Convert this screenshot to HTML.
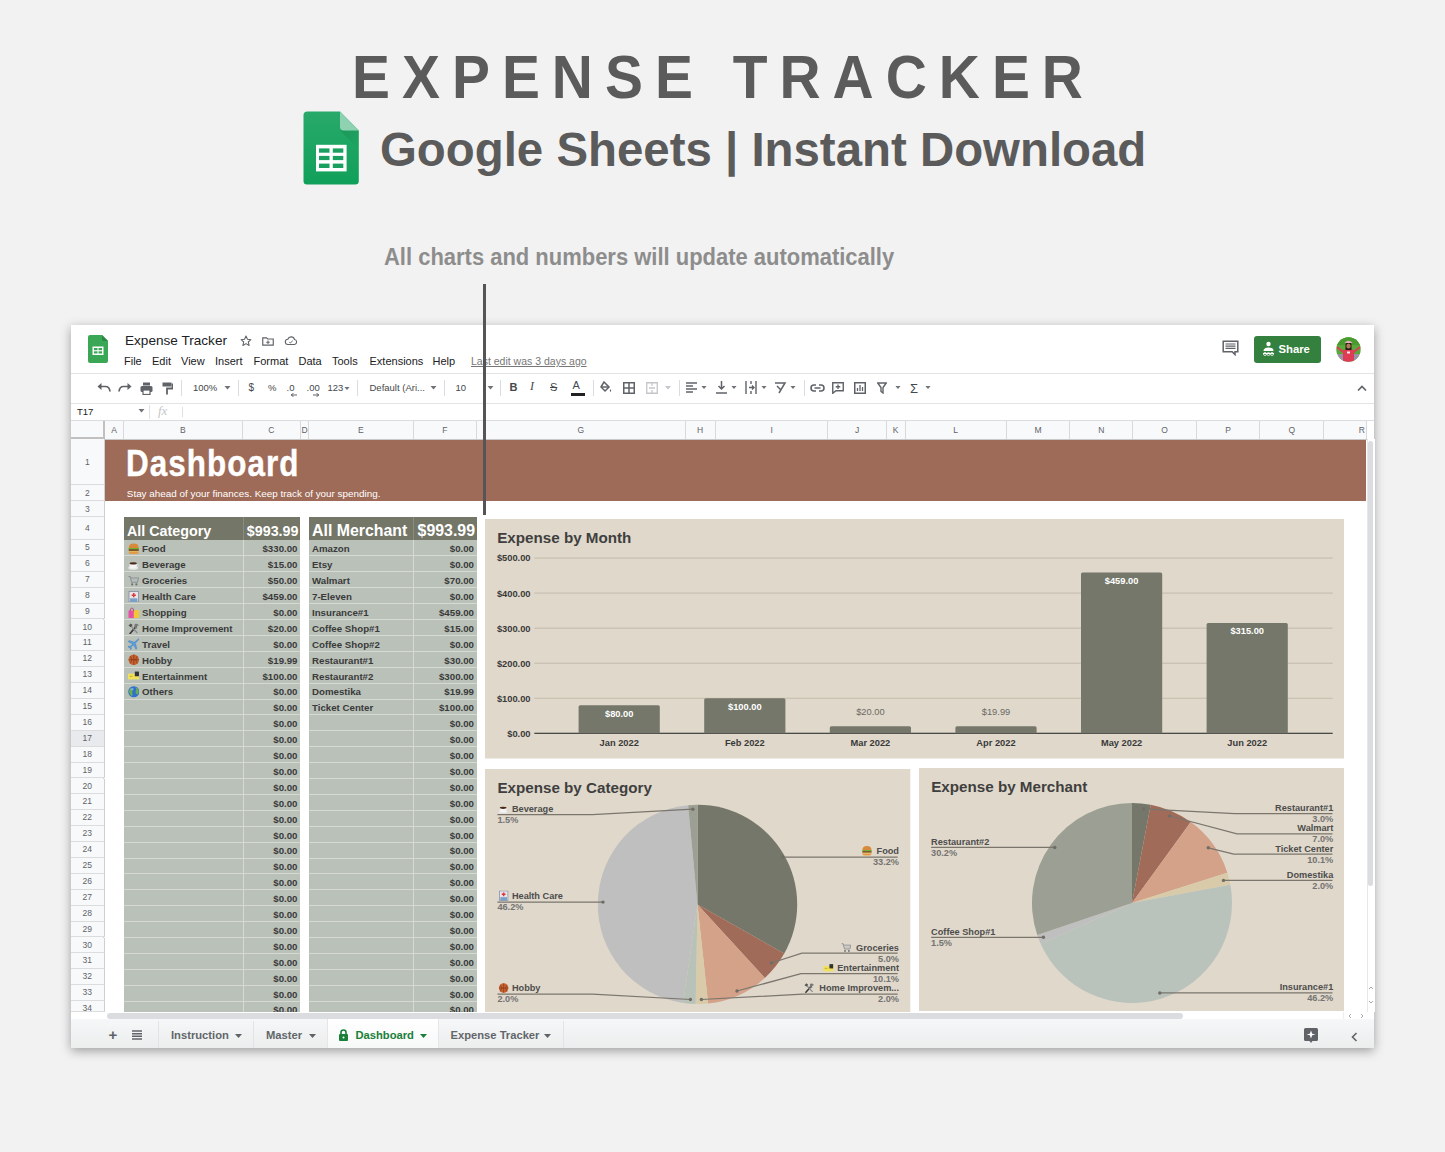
<!DOCTYPE html>
<html><head><meta charset="utf-8">
<style>
*{box-sizing:border-box;margin:0;padding:0}
html,body{width:1445px;height:1152px;overflow:hidden;background:#f2f2f2;font-family:"Liberation Sans",sans-serif}
.a{position:absolute;white-space:nowrap}
#title{left:351.5px;top:47px;font-size:60.5px;font-weight:bold;color:#5b5b5b;letter-spacing:12.8px;line-height:60px;transform:scaleX(.94);transform-origin:0 0}
#sub{left:380px;top:122px;font-size:47.4px;font-weight:bold;color:#5b5b5b;line-height:56px}
#note{left:384px;top:244px;font-size:23px;font-weight:bold;color:#8d8d8d;line-height:26px;transform:scaleX(.955);transform-origin:0 0}
#vline{left:483px;top:284px;width:3px;height:231px;background:#555;z-index:50}
#win{left:71px;top:325px;width:1303px;height:723px;background:#fff;box-shadow:0 3px 10px rgba(0,0,0,.35)}
.menu{font-size:11px;color:#202124;top:354px;line-height:14px}
.tb{color:#45484c;font-size:9.5px;top:382px;line-height:12px}
.tab{top:1027.5px;font-size:11.2px;font-weight:bold;color:#62666a;line-height:14px}
.ch{top:421px;height:18px;background:#f8f9fa;border-right:1px solid #d9d9d9;font-size:8.5px;color:#5f6368;text-align:center;line-height:18px}
.rh{left:71px;width:33.5px;background:#f8f9fa;border-bottom:1px solid #dcdcdc;border-right:1px solid #cfcfcf;font-size:8.5px;color:#5f6368;text-align:center}
.cell{height:15.9px;font-size:9.7px;font-weight:bold;color:#3a3a3a;line-height:16px}
.hd{font-size:14.5px;font-weight:bold;color:#fff;line-height:18px}
</style></head><body>
<div id="title" class="a">EXPENSE TRACKER</div>
<svg class="a" style="left:303px;top:111px" width="56" height="74" viewBox="0 0 56 74">
 <defs><linearGradient id="bg1" x1="0" y1="0" x2="0" y2="1"><stop offset="0" stop-color="#28a96a"/><stop offset="1" stop-color="#10a05a"/></linearGradient><linearGradient id="fs" x1="0" y1="0" x2="1" y2="1"><stop offset="0" stop-color="#0f7a40" stop-opacity=".35"/><stop offset="1" stop-color="#0f7a40" stop-opacity="0"/></linearGradient></defs>
 <path d="M4.5 .6 H37 L55.8 19.4 V70 Q55.8 73.6 52.2 73.6 H4.1 Q.5 73.6 .5 70 V4.2 Q.5 .6 4.5 .6Z" fill="url(#bg1)"/>
 <path d="M37 19.4 L55.8 38 V19.4Z" fill="url(#fs)"/>
 <path d="M37 .6 L55.8 19.4 H40.5 Q37 19.4 37 16Z" fill="#8ed2b2"/>
 <rect x="13" y="33.8" width="30.6" height="26.6" fill="#fff"/>
 <rect x="16" y="37.4" width="10.5" height="4.3" fill="#19a05e"/><rect x="29.8" y="37.4" width="10.5" height="4.3" fill="#19a05e"/>
 <rect x="16" y="44.9" width="10.5" height="4.2" fill="#19a05e"/><rect x="29.8" y="44.9" width="10.5" height="4.2" fill="#19a05e"/>
 <rect x="16" y="52.6" width="10.5" height="4.4" fill="#19a05e"/><rect x="29.8" y="52.6" width="10.5" height="4.4" fill="#19a05e"/>
</svg>
<div id="sub" class="a">Google Sheets | Instant Download</div>
<div id="note" class="a">All charts and numbers will update automatically</div>
<div id="win" class="a"></div>
<!-- title bar -->
<svg class="a" style="left:88px;top:335px" width="20" height="28" viewBox="0 0 20 28">
 <path d="M2 0 H14 L20 6 V26 Q20 28 18 28 H2 Q0 28 0 26 V2 Q0 0 2 0Z" fill="#3aa757"/>
 <path d="M14 0 L20 6 H15.5 Q14 6 14 4.5Z" fill="#2a8a44"/>
 <rect x="4.5" y="11.5" width="11" height="8.5" fill="#fff"/>
 <rect x="6" y="13" width="3.5" height="2.2" fill="#3aa757"/><rect x="10.5" y="13" width="3.5" height="2.2" fill="#3aa757"/>
 <rect x="6" y="16.3" width="3.5" height="2.2" fill="#3aa757"/><rect x="10.5" y="16.3" width="3.5" height="2.2" fill="#3aa757"/>
</svg>
<div class="a" style="left:125px;top:333px;font-size:13.6px;color:#202124;line-height:16px">Expense Tracker</div>
<svg class="a" style="left:239px;top:334px" width="14" height="14" viewBox="0 0 24 24"><path d="M12 3.5l2.5 5.6 6 .6-4.6 4 1.4 6-5.3-3.2-5.3 3.2 1.4-6-4.6-4 6-.6z" fill="none" stroke="#5f6368" stroke-width="1.8" stroke-linejoin="round"/></svg>
<svg class="a" style="left:261px;top:334px" width="14" height="14" viewBox="0 0 24 24"><path d="M3 6.5h6.5l2 2H21V19H3z" fill="none" stroke="#5f6368" stroke-width="2"/><path d="M12 11v6M9 14h6" stroke="#5f6368" stroke-width="1.8"/></svg>
<svg class="a" style="left:284px;top:334px" width="14" height="14" viewBox="0 0 24 24"><path d="M7 18a4.5 4.5 0 0 1-.5-9A6 6 0 0 1 18 9.5 4.3 4.3 0 0 1 18 18z" fill="none" stroke="#5f6368" stroke-width="1.9"/><path d="M9 13.5l2 2 4-4" fill="none" stroke="#5f6368" stroke-width="1.7"/></svg>
<div class="a menu" style="left:124px">File</div>
<div class="a menu" style="left:152px">Edit</div>
<div class="a menu" style="left:181px">View</div>
<div class="a menu" style="left:215px">Insert</div>
<div class="a menu" style="left:253.5px">Format</div>
<div class="a menu" style="left:298.5px">Data</div>
<div class="a menu" style="left:332px">Tools</div>
<div class="a menu" style="left:369.5px">Extensions</div>
<div class="a menu" style="left:432.5px">Help</div>
<div class="a menu" style="left:471px;color:#777;text-decoration:underline;font-size:10.5px">Last edit was 3 days ago</div>
<svg class="a" style="left:1222px;top:340px" width="17" height="16" viewBox="0 0 17 16"><path d="M1.2 1.2h14.6v10.6h-2.8v2.8l-2.8-2.8H1.2z" fill="none" stroke="#5f6368" stroke-width="1.5"/><path d="M3.5 4h10M3.5 6.2h10M3.5 8.4h10" stroke="#5f6368" stroke-width="1.2"/></svg>
<div class="a" style="left:1254px;top:335.5px;width:67px;height:27px;background:#34803e;border-radius:3px"></div>
<svg class="a" style="left:1262px;top:341px" width="13" height="16" viewBox="0 0 13 16"><circle cx="6.5" cy="3" r="2.2" fill="#fff"/><path d="M1.5 10 Q1.5 6.5 6.5 6.5 Q11.5 6.5 11.5 10z" fill="#fff"/><path d="M1 12.5h11" stroke="#fff" stroke-width="1"/><circle cx="3" cy="13" r="1.5" fill="none" stroke="#fff" stroke-width=".8"/><circle cx="6.5" cy="13" r="1.5" fill="none" stroke="#fff" stroke-width=".8"/><circle cx="10" cy="13" r="1.5" fill="none" stroke="#fff" stroke-width=".8"/></svg>
<div class="a" style="left:1278.5px;top:342px;font-size:11.3px;font-weight:bold;color:#fff;line-height:14px">Share</div>
<svg class="a" style="left:1336px;top:337px" width="25" height="25" viewBox="0 0 25 25">
 <defs><clipPath id="av"><circle cx="12.5" cy="12.5" r="12.2"/></clipPath></defs>
 <g clip-path="url(#av)"><rect width="25" height="25" fill="#58a83a"/><rect x="0" y="0" width="25" height="8" fill="#4b9a30"/>
 <path d="M1 9 L7 13.5 L9 12.5 L16 12.5 L18 13.5 L24 9 L24.5 11 L18 16 L18 25 L7 25 L7 16 L.5 11z" fill="#e03a55"/>
 <path d="M9.5 8 Q9.5 5 12.5 5 Q15.5 5 15.5 8 L15.5 13 L9.5 13z" fill="#2a1a14"/>
 <ellipse cx="12.5" cy="9" rx="2.2" ry="2.6" fill="#b07a5a"/>
 <path d="M8.5 6 Q12.5 1.5 16.5 6z" fill="#e0b0bc"/>
 <rect x="11" y="14.5" width="3" height="2" fill="#f0f0f0"/>
 <rect x="2" y="17" width="5" height="8" fill="#9a90a8"/><rect x="18" y="17" width="5" height="8" fill="#9a90a8"/></g>
</svg>
<div class="a" style="left:71px;top:373px;width:1303px;height:1px;background:#e3e3e3"></div>
<!-- toolbar -->
<svg class="a" style="left:97px;top:382px" width="14" height="12" viewBox="0 0 14 12"><path d="M3 4.5 H8.5 Q12.5 4.5 13 9.5" fill="none" stroke="#5f6368" stroke-width="1.7"/><path d="M0.5 4.5 L4.5 1 V8z" fill="#5f6368"/></svg>
<svg class="a" style="left:118px;top:382px" width="14" height="12" viewBox="0 0 14 12"><path d="M11 4.5 H5.5 Q1.5 4.5 1 9.5" fill="none" stroke="#5f6368" stroke-width="1.7"/><path d="M13.5 4.5 L9.5 1 V8z" fill="#5f6368"/></svg>
<svg class="a" style="left:140px;top:382px" width="13" height="13" viewBox="0 0 13 13"><rect x="3" y="0.5" width="7" height="3" fill="#5f6368"/><rect x="0.5" y="4" width="12" height="6" rx="1.5" fill="#5f6368"/><rect x="3" y="8" width="7" height="4.5" fill="#fff" stroke="#5f6368" stroke-width="1.2"/></svg>
<svg class="a" style="left:162px;top:382px" width="11" height="13" viewBox="0 0 11 13"><rect x="0.5" y="0.5" width="9" height="4" fill="#5f6368"/><path d="M9.5 2.5 H10.5 V6.5 H5 V12.5" fill="none" stroke="#5f6368" stroke-width="1.8"/></svg>
<div class="a" style="left:181px;top:380px;width:1px;height:16px;background:#dadce0"></div>
<div class="a tb" style="left:193px">100%</div>
<svg class="a" style="left:224px;top:386px" width="7" height="4" viewBox="0 0 7 4"><path d="M.5 0h6L3.5 3.5z" fill="#6f7378"/></svg>
<div class="a" style="left:237.5px;top:380px;width:1px;height:16px;background:#dadce0"></div>
<div class="a tb" style="left:248.5px;font-size:10px">$</div>
<div class="a tb" style="left:268px">%</div>
<div class="a tb" style="left:286.5px">.0</div>
<svg class="a" style="left:290px;top:393px" width="7" height="4" viewBox="0 0 7 4"><path d="M7 2H2M3.5 0.3 L1 2 L3.5 3.7" fill="none" stroke="#5f6368" stroke-width="1"/></svg>
<div class="a tb" style="left:306.5px">.00</div>
<svg class="a" style="left:313px;top:393px" width="7" height="4" viewBox="0 0 7 4"><path d="M0 2H5M3.5 0.3 L6 2 L3.5 3.7" fill="none" stroke="#5f6368" stroke-width="1"/></svg>
<div class="a tb" style="left:327.5px">123</div>
<svg class="a" style="left:344px;top:387px" width="6" height="3.5" viewBox="0 0 7 4"><path d="M.5 0h6L3.5 3.5z" fill="#6f7378"/></svg>
<div class="a" style="left:357px;top:380px;width:1px;height:16px;background:#dadce0"></div>
<div class="a tb" style="left:369.5px">Default (Ari...</div>
<svg class="a" style="left:430px;top:386px" width="7" height="4" viewBox="0 0 7 4"><path d="M.5 0h6L3.5 3.5z" fill="#6f7378"/></svg>
<div class="a" style="left:444px;top:380px;width:1px;height:16px;background:#dadce0"></div>
<div class="a tb" style="left:455.5px">10</div>
<svg class="a" style="left:487px;top:386px" width="7" height="4" viewBox="0 0 7 4"><path d="M.5 0h6L3.5 3.5z" fill="#6f7378"/></svg>
<div class="a" style="left:500px;top:380px;width:1px;height:16px;background:#dadce0"></div>
<div class="a tb" style="left:509.5px;font-weight:bold;font-size:11px;top:381px">B</div>
<div class="a tb" style="left:530px;font-style:italic;font-size:12px;top:380px;font-family:'Liberation Serif',serif">I</div>
<div class="a tb" style="left:550px;font-size:11px;top:381px;text-decoration:line-through">S</div>
<div class="a tb" style="left:572.5px;font-size:11px;top:379px">A</div>
<div class="a" style="left:571px;top:393px;width:14px;height:2.5px;background:#222"></div>
<div class="a" style="left:593px;top:380px;width:1px;height:16px;background:#dadce0"></div>
<svg class="a" style="left:600px;top:381px" width="12" height="13" viewBox="0 0 12 13"><path d="M4 1 L9 6 L5 10 L1 6z" fill="none" stroke="#5f6368" stroke-width="1.5"/><path d="M2 6h7" stroke="#5f6368" stroke-width="1.5"/><path d="M10.5 8 Q12 10 10.5 11 Q9 10 10.5 8z" fill="#5f6368"/></svg>
<svg class="a" style="left:623px;top:382px" width="12" height="12" viewBox="0 0 12 12"><path d="M.75 .75h10.5v10.5H.75zM6 .75v10.5M.75 6h10.5" fill="none" stroke="#5f6368" stroke-width="1.5"/></svg>
<svg class="a" style="left:646px;top:382px" width="12" height="12" viewBox="0 0 12 12"><path d="M.75 .75h10.5v10.5H.75zM6 .75v3M6 8v3M3 6h6" fill="none" stroke="#c4c6c9" stroke-width="1.3"/></svg>
<svg class="a" style="left:665px;top:386px" width="6" height="3.5" viewBox="0 0 7 4"><path d="M0 0h7L3.5 4z" fill="#c4c6c9"/></svg>
<div class="a" style="left:679px;top:380px;width:1px;height:16px;background:#dadce0"></div>
<svg class="a" style="left:686px;top:382px" width="11" height="11" viewBox="0 0 11 11"><path d="M0 1h11M0 4h7M0 7h11M0 10h7" stroke="#5f6368" stroke-width="1.4"/></svg>
<svg class="a" style="left:701px;top:386px" width="6" height="3.5" viewBox="0 0 7 4"><path d="M.5 0h6L3.5 3.5z" fill="#6f7378"/></svg>
<svg class="a" style="left:716px;top:381px" width="11" height="13" viewBox="0 0 11 13"><path d="M5.5 0v8M2.5 5l3 3 3-3M0 12h11" fill="none" stroke="#5f6368" stroke-width="1.5"/></svg>
<svg class="a" style="left:731px;top:386px" width="6" height="3.5" viewBox="0 0 7 4"><path d="M.5 0h6L3.5 3.5z" fill="#6f7378"/></svg>
<svg class="a" style="left:745px;top:381px" width="12" height="13" viewBox="0 0 12 13"><path d="M1 0v13M11 0v13M4 6.5h5M7 4.5l2 2-2 2M6 0v3M6 10v3" fill="none" stroke="#5f6368" stroke-width="1.4"/></svg>
<svg class="a" style="left:761px;top:386px" width="6" height="3.5" viewBox="0 0 7 4"><path d="M.5 0h6L3.5 3.5z" fill="#6f7378"/></svg>
<svg class="a" style="left:774px;top:382px" width="13" height="12" viewBox="0 0 13 12"><path d="M1 1h10l-6 10M3 4l4 4" fill="none" stroke="#5f6368" stroke-width="1.5"/></svg>
<svg class="a" style="left:790px;top:386px" width="6" height="3.5" viewBox="0 0 7 4"><path d="M.5 0h6L3.5 3.5z" fill="#6f7378"/></svg>
<div class="a" style="left:803.5px;top:380px;width:1px;height:16px;background:#dadce0"></div>
<svg class="a" style="left:810px;top:384px" width="15" height="8" viewBox="0 0 15 8"><path d="M6 1H4a3 3 0 0 0 0 6h2M9 1h2a3 3 0 0 1 0 6H9M4.5 4h6" fill="none" stroke="#5f6368" stroke-width="1.6"/></svg>
<svg class="a" style="left:832px;top:382px" width="12" height="12" viewBox="0 0 12 12"><path d="M.75 .75h10.5v8H4l-3.25 2.5z" fill="none" stroke="#5f6368" stroke-width="1.4"/><path d="M6 2.5v4.5M3.75 4.75h4.5" stroke="#5f6368" stroke-width="1.3"/></svg>
<svg class="a" style="left:854px;top:382px" width="12" height="12" viewBox="0 0 12 12"><path d="M.75 .75h10.5v10.5H.75z" fill="none" stroke="#5f6368" stroke-width="1.5"/><path d="M3.5 9V6M6 9V3M8.5 9V5" stroke="#5f6368" stroke-width="1.3"/></svg>
<svg class="a" style="left:877px;top:382px" width="10" height="12" viewBox="0 0 10 12"><path d="M.75 1h8.5L6 5.5V11L4 9.5V5.5z" fill="none" stroke="#5f6368" stroke-width="1.4"/></svg>
<svg class="a" style="left:895px;top:386px" width="6" height="3.5" viewBox="0 0 7 4"><path d="M.5 0h6L3.5 3.5z" fill="#6f7378"/></svg>
<div class="a tb" style="left:910px;font-size:13px;top:382px;line-height:13px">&Sigma;</div>
<svg class="a" style="left:925px;top:386px" width="6" height="3.5" viewBox="0 0 7 4"><path d="M.5 0h6L3.5 3.5z" fill="#6f7378"/></svg>
<svg class="a" style="left:1357px;top:385px" width="10" height="6" viewBox="0 0 10 6"><path d="M1 5.5 L5 1.5 L9 5.5" fill="none" stroke="#5f6368" stroke-width="1.6"/></svg>
<div class="a" style="left:71px;top:403px;width:1303px;height:1px;background:#e3e3e3"></div>
<!-- formula bar -->
<div class="a" style="left:77px;top:406px;font-size:9.5px;color:#202124;line-height:12px">T17</div>
<svg class="a" style="left:138px;top:409px" width="7" height="4" viewBox="0 0 7 4"><path d="M.5 0h6L3.5 3.5z" fill="#6f7378"/></svg>
<div class="a" style="left:148.5px;top:405px;width:1px;height:14px;background:#e0e0e0"></div>
<div class="a" style="left:158px;top:403px;font-size:13px;color:#c6c6c6;font-style:italic;font-family:'Liberation Serif',serif;line-height:16px">fx</div>
<div class="a" style="left:181.5px;top:407px;width:1px;height:10px;background:#e0e0e0"></div>
<div class="a" style="left:71px;top:420px;width:1303px;height:1px;background:#dadce0"></div>
<div class="a" style="left:71px;top:421px;width:1296px;height:18px;background:#f8f9fa"></div>
<div class="a ch" style="left:105px;width:19.0px">A</div>
<div class="a ch" style="left:124px;width:118.5px">B</div>
<div class="a ch" style="left:242.5px;width:58.5px">C</div>
<div class="a ch" style="left:301px;width:8.0px">D</div>
<div class="a ch" style="left:309px;width:104.5px">E</div>
<div class="a ch" style="left:413.5px;width:63.5px">F</div>
<div class="a ch" style="left:477px;width:208.5px">G</div>
<div class="a ch" style="left:685.5px;width:30.2px">H</div>
<div class="a ch" style="left:715.7px;width:112.8px">I</div>
<div class="a ch" style="left:828.5px;width:58.3px">J</div>
<div class="a ch" style="left:886.8px;width:18.8px">K</div>
<div class="a ch" style="left:905.6px;width:101.2px">L</div>
<div class="a ch" style="left:1006.8px;width:63.6px">M</div>
<div class="a ch" style="left:1070.4px;width:63.0px">N</div>
<div class="a ch" style="left:1133.4px;width:63.5px">O</div>
<div class="a ch" style="left:1196.9px;width:63.6px">P</div>
<div class="a ch" style="left:1260.5px;width:63.5px">Q</div>
<div class="a ch" style="left:1324px;width:43.0px;text-align:right;padding-right:1px">R</div>
<div class="a" style="left:71px;top:436.5px;width:34px;height:2.5px;background:#c0c0c0"></div>
<div class="a" style="left:102.5px;top:421px;width:2.5px;height:18px;background:#c0c0c0"></div>
<div class="a" style="left:71px;top:438.5px;width:1296px;height:1px;background:#c8c8c8"></div>
<div class="a" style="left:71px;top:439px;width:33px;height:573px;background:#f8f9fa;border-right:1px solid #d0d0d0"></div>
<div class="a rh" style="top:439.0px;height:46.0px;line-height:46.0px">1</div>
<div class="a rh" style="top:485.0px;height:16.0px;line-height:16.0px">2</div>
<div class="a rh" style="top:501.0px;height:16.0px;line-height:16.0px">3</div>
<div class="a rh" style="top:517.0px;height:23.0px;line-height:23.0px">4</div>
<div class="a rh" style="top:540.0px;height:15.9px;line-height:15.9px">5</div>
<div class="a rh" style="top:555.9px;height:15.9px;line-height:15.9px">6</div>
<div class="a rh" style="top:571.8px;height:15.9px;line-height:15.9px">7</div>
<div class="a rh" style="top:587.7px;height:15.9px;line-height:15.9px">8</div>
<div class="a rh" style="top:603.6px;height:15.9px;line-height:15.9px">9</div>
<div class="a rh" style="top:619.5px;height:15.9px;line-height:15.9px">10</div>
<div class="a rh" style="top:635.4px;height:15.9px;line-height:15.9px">11</div>
<div class="a rh" style="top:651.3px;height:15.9px;line-height:15.9px">12</div>
<div class="a rh" style="top:667.2px;height:15.9px;line-height:15.9px">13</div>
<div class="a rh" style="top:683.1px;height:15.9px;line-height:15.9px">14</div>
<div class="a rh" style="top:699.0px;height:15.9px;line-height:15.9px">15</div>
<div class="a rh" style="top:714.9px;height:15.9px;line-height:15.9px">16</div>
<div class="a rh" style="top:730.8px;height:15.9px;line-height:15.9px">17</div>
<div class="a rh" style="top:746.7px;height:15.9px;line-height:15.9px">18</div>
<div class="a rh" style="top:762.6px;height:15.9px;line-height:15.9px">19</div>
<div class="a rh" style="top:778.5px;height:15.9px;line-height:15.9px">20</div>
<div class="a rh" style="top:794.4px;height:15.9px;line-height:15.9px">21</div>
<div class="a rh" style="top:810.3px;height:15.9px;line-height:15.9px">22</div>
<div class="a rh" style="top:826.2px;height:15.9px;line-height:15.9px">23</div>
<div class="a rh" style="top:842.1px;height:15.9px;line-height:15.9px">24</div>
<div class="a rh" style="top:858.0px;height:15.9px;line-height:15.9px">25</div>
<div class="a rh" style="top:873.9px;height:15.9px;line-height:15.9px">26</div>
<div class="a rh" style="top:889.8px;height:15.9px;line-height:15.9px">27</div>
<div class="a rh" style="top:905.7px;height:15.9px;line-height:15.9px">28</div>
<div class="a rh" style="top:921.6px;height:15.9px;line-height:15.9px">29</div>
<div class="a rh" style="top:937.5px;height:15.9px;line-height:15.9px">30</div>
<div class="a rh" style="top:953.4px;height:15.9px;line-height:15.9px">31</div>
<div class="a rh" style="top:969.3px;height:15.9px;line-height:15.9px">32</div>
<div class="a rh" style="top:985.2px;height:15.9px;line-height:15.9px">33</div>
<div class="a rh" style="top:1001.1px;height:10.9px;line-height:15.9px">34</div>
<div class="a" style="left:71px;top:730.8px;width:33.5px;height:15.9px;background:#e8eaed;border-bottom:1px solid #dcdcdc;border-right:1px solid #cfcfcf;font-size:8.5px;color:#5f6368;text-align:center;line-height:15.9px">17</div>
<div class="a" style="left:105px;top:439.5px;width:1261px;height:61.5px;background:#9e6b58"></div>
<div class="a" style="left:126px;top:439px;font-size:37px;font-weight:bold;color:#fff;line-height:50px;-webkit-text-stroke:.4px #fff;letter-spacing:1.2px;transform:scaleX(0.85);transform-origin:0 0">Dashboard</div>
<div class="a" style="left:126.8px;top:487.5px;font-size:9.9px;color:#fff;line-height:12px">Stay ahead of your finances. Keep track of your spending.</div>
<div class="a" style="left:1366.5px;top:439px;width:8px;height:573px;background:#fff;border-left:1px solid #e8e8e8"></div>
<div class="a" style="left:1368px;top:441px;width:5px;height:445px;background:#dadce0;border-radius:3px"></div>
<div class="a" style="left:124px;top:517px;width:176px;height:23px;background:#747668"></div>
<div class="a" style="left:242.5px;top:517px;width:1px;height:23px;background:#8a8c80"></div>
<div class="a hd" style="left:127px;top:521.5px;font-size:14.3px">All Category</div>
<div class="a hd" style="left:242.5px;width:56.0px;text-align:right;top:521.5px;font-size:14.3px">$993.99</div>
<div class="a" style="left:124px;top:540px;width:176px;height:472px;background:#b9c1b8"></div>
<div class="a" style="left:124px;top:555.4px;width:176px;height:1px;background:#d6dad2"></div>
<div class="a" style="left:124px;top:571.3px;width:176px;height:1px;background:#d6dad2"></div>
<div class="a" style="left:124px;top:587.2px;width:176px;height:1px;background:#d6dad2"></div>
<div class="a" style="left:124px;top:603.1px;width:176px;height:1px;background:#d6dad2"></div>
<div class="a" style="left:124px;top:619.0px;width:176px;height:1px;background:#d6dad2"></div>
<div class="a" style="left:124px;top:634.9px;width:176px;height:1px;background:#d6dad2"></div>
<div class="a" style="left:124px;top:650.8px;width:176px;height:1px;background:#d6dad2"></div>
<div class="a" style="left:124px;top:666.7px;width:176px;height:1px;background:#d6dad2"></div>
<div class="a" style="left:124px;top:682.6px;width:176px;height:1px;background:#d6dad2"></div>
<div class="a" style="left:124px;top:698.5px;width:176px;height:1px;background:#d6dad2"></div>
<div class="a" style="left:124px;top:714.4px;width:176px;height:1px;background:#d6dad2"></div>
<div class="a" style="left:124px;top:730.3px;width:176px;height:1px;background:#d6dad2"></div>
<div class="a" style="left:124px;top:746.2px;width:176px;height:1px;background:#d6dad2"></div>
<div class="a" style="left:124px;top:762.1px;width:176px;height:1px;background:#d6dad2"></div>
<div class="a" style="left:124px;top:778.0px;width:176px;height:1px;background:#d6dad2"></div>
<div class="a" style="left:124px;top:793.9px;width:176px;height:1px;background:#d6dad2"></div>
<div class="a" style="left:124px;top:809.8px;width:176px;height:1px;background:#d6dad2"></div>
<div class="a" style="left:124px;top:825.7px;width:176px;height:1px;background:#d6dad2"></div>
<div class="a" style="left:124px;top:841.6px;width:176px;height:1px;background:#d6dad2"></div>
<div class="a" style="left:124px;top:857.5px;width:176px;height:1px;background:#d6dad2"></div>
<div class="a" style="left:124px;top:873.4px;width:176px;height:1px;background:#d6dad2"></div>
<div class="a" style="left:124px;top:889.3px;width:176px;height:1px;background:#d6dad2"></div>
<div class="a" style="left:124px;top:905.2px;width:176px;height:1px;background:#d6dad2"></div>
<div class="a" style="left:124px;top:921.1px;width:176px;height:1px;background:#d6dad2"></div>
<div class="a" style="left:124px;top:937.0px;width:176px;height:1px;background:#d6dad2"></div>
<div class="a" style="left:124px;top:952.9px;width:176px;height:1px;background:#d6dad2"></div>
<div class="a" style="left:124px;top:968.8px;width:176px;height:1px;background:#d6dad2"></div>
<div class="a" style="left:124px;top:984.7px;width:176px;height:1px;background:#d6dad2"></div>
<div class="a" style="left:124px;top:1000.6px;width:176px;height:1px;background:#d6dad2"></div>
<div class="a" style="left:242.5px;top:540px;width:1px;height:472px;background:#d6dad2"></div>
<svg class="a" style="left:127.5px;top:543.0px" width="11.5" height="11.5" viewBox="0 0 22 22"><path d="M1.5 9.5 Q1.5 1 11 1 Q20.5 1 20.5 9.5z" fill="#d9893a"/><rect x="1" y="9.5" width="20" height="2.6" fill="#6fb02a"/><rect x="1.5" y="12" width="19" height="3.2" fill="#6a3a1e"/><rect x="1.5" y="15" width="19" height="1.5" fill="#f0c030"/><path d="M1.5 16.5h19v1.5 Q20.5 21 16.5 21H5.5 Q1.5 21 1.5 18z" fill="#e39a48"/></svg>
<div class="a cell" style="left:142px;top:541.3px">Food</div>
<div class="a cell" style="left:242.5px;width:55.0px;text-align:right;top:541.3px">$330.00</div>
<svg class="a" style="left:127.5px;top:558.9px" width="11.5" height="11.5" viewBox="0 0 22 22"><ellipse cx="10" cy="17" rx="9.5" ry="3.5" fill="#e8e8e8"/><path d="M3 8h14v5 Q17 18 10 18 Q3 18 3 13z" fill="#f4f4f4"/><ellipse cx="10" cy="8.5" rx="7" ry="2.2" fill="#4a2a1a"/><path d="M17 10 Q21 10 20 13 Q19 15 16.5 14" fill="none" stroke="#ddd" stroke-width="1.5"/></svg>
<div class="a cell" style="left:142px;top:557.2px">Beverage</div>
<div class="a cell" style="left:242.5px;width:55.0px;text-align:right;top:557.2px">$15.00</div>
<svg class="a" style="left:127.5px;top:574.8px" width="11.5" height="11.5" viewBox="0 0 22 22"><path d="M1 3h3l3 11h11l2-8H6" fill="none" stroke="#8a8e92" stroke-width="2"/><path d="M7 7h12M8 10h10" stroke="#b0b4b8" stroke-width="1.5"/><circle cx="8" cy="18" r="2" fill="#6a6e72"/><circle cx="16" cy="18" r="2" fill="#6a6e72"/></svg>
<div class="a cell" style="left:142px;top:573.1px">Groceries</div>
<div class="a cell" style="left:242.5px;width:55.0px;text-align:right;top:573.1px">$50.00</div>
<svg class="a" style="left:127.5px;top:590.7px" width="11.5" height="11.5" viewBox="0 0 22 22"><rect x="2" y="1" width="18" height="20" fill="#e8e4ea" stroke="#6a7a9a" stroke-width="1.2"/><path d="M11 4v8M7 8h8" stroke="#d93a3a" stroke-width="3"/><rect x="4" y="14" width="14" height="7" fill="#7aa0c8"/></svg>
<div class="a cell" style="left:142px;top:589.0px">Health Care</div>
<div class="a cell" style="left:242.5px;width:55.0px;text-align:right;top:589.0px">$459.00</div>
<svg class="a" style="left:127.5px;top:606.6px" width="11.5" height="11.5" viewBox="0 0 22 22"><rect x="1" y="7" width="13" height="14" fill="#e94fa6"/><rect x="11" y="6" width="10" height="15" fill="#f2c832"/><path d="M4 8 Q4 2 7.5 2 Q11 2 11 8" fill="none" stroke="#b3306e" stroke-width="1.5"/></svg>
<div class="a cell" style="left:142px;top:604.9px">Shopping</div>
<div class="a cell" style="left:242.5px;width:55.0px;text-align:right;top:604.9px">$0.00</div>
<svg class="a" style="left:127.5px;top:622.5px" width="11.5" height="11.5" viewBox="0 0 22 22"><path d="M4 20 L16 6" stroke="#3a3a3a" stroke-width="3.2" stroke-linecap="round"/><path d="M13 2 Q19 0 21 5 L18 5 L16 8 L18 10 Q13 12 12 7z" fill="#777"/><path d="M4 4 L18 19" stroke="#8a8a8a" stroke-width="2.6"/><path d="M1 5 L5 1 L9 4 L5 8z" fill="#555"/></svg>
<div class="a cell" style="left:142px;top:620.8px">Home Improvement</div>
<div class="a cell" style="left:242.5px;width:55.0px;text-align:right;top:620.8px">$20.00</div>
<svg class="a" style="left:127.5px;top:638.4px" width="11.5" height="11.5" viewBox="0 0 22 22"><path d="M20.5 1.5 Q22 1 21 3 L14 10 L17 20 L15 21.5 L10.5 13 L6 17.5 L6.5 21 L5 22 L3.5 18.5 L0 17 L1 15.5 L4.5 16 L9 11.5 L0.5 7 L2 5 L12 8z" fill="#5aa0e0" stroke="#3a78b8" stroke-width=".8"/></svg>
<div class="a cell" style="left:142px;top:636.7px">Travel</div>
<div class="a cell" style="left:242.5px;width:55.0px;text-align:right;top:636.7px">$0.00</div>
<svg class="a" style="left:127.5px;top:654.3px" width="11.5" height="11.5" viewBox="0 0 22 22"><circle cx="11" cy="11" r="10" fill="#c8612e"/><path d="M1 11h20M11 1v20M4 4 Q10 11 4 18M18 4 Q12 11 18 18" fill="none" stroke="#6b2a10" stroke-width="1"/></svg>
<div class="a cell" style="left:142px;top:652.6px">Hobby</div>
<div class="a cell" style="left:242.5px;width:55.0px;text-align:right;top:652.6px">$19.99</div>
<svg class="a" style="left:127.5px;top:670.2px" width="11.5" height="11.5" viewBox="0 0 22 22"><rect x="0" y="7" width="22" height="11" fill="#f0e05a"/><rect x="13" y="3" width="8" height="9" fill="#333"/><path d="M3 12h6" stroke="#a89a2a" stroke-width="1.3"/></svg>
<div class="a cell" style="left:142px;top:668.5px">Entertainment</div>
<div class="a cell" style="left:242.5px;width:55.0px;text-align:right;top:668.5px">$100.00</div>
<svg class="a" style="left:127.5px;top:686.1px" width="11.5" height="11.5" viewBox="0 0 22 22"><circle cx="11" cy="11" r="10.5" fill="#2f6fd0"/><path d="M4 4.5 Q9 5 9 9 Q7 12 9 16 L7.5 20 Q2 16 2 10z M13 2.5 Q17 4.5 15.5 8.5 Q13.5 10 15 14 L18.5 16.5 Q22 11 19 5z" fill="#6ab04a"/><ellipse cx="8" cy="6" rx="3" ry="2" fill="#9cc8f0" opacity=".6"/></svg>
<div class="a cell" style="left:142px;top:684.4px">Others</div>
<div class="a cell" style="left:242.5px;width:55.0px;text-align:right;top:684.4px">$0.00</div>
<div class="a cell" style="left:242.5px;width:55.0px;text-align:right;top:700.3px">$0.00</div>
<div class="a cell" style="left:242.5px;width:55.0px;text-align:right;top:716.2px">$0.00</div>
<div class="a cell" style="left:242.5px;width:55.0px;text-align:right;top:732.1px">$0.00</div>
<div class="a cell" style="left:242.5px;width:55.0px;text-align:right;top:748.0px">$0.00</div>
<div class="a cell" style="left:242.5px;width:55.0px;text-align:right;top:763.9px">$0.00</div>
<div class="a cell" style="left:242.5px;width:55.0px;text-align:right;top:779.8px">$0.00</div>
<div class="a cell" style="left:242.5px;width:55.0px;text-align:right;top:795.7px">$0.00</div>
<div class="a cell" style="left:242.5px;width:55.0px;text-align:right;top:811.6px">$0.00</div>
<div class="a cell" style="left:242.5px;width:55.0px;text-align:right;top:827.5px">$0.00</div>
<div class="a cell" style="left:242.5px;width:55.0px;text-align:right;top:843.4px">$0.00</div>
<div class="a cell" style="left:242.5px;width:55.0px;text-align:right;top:859.3px">$0.00</div>
<div class="a cell" style="left:242.5px;width:55.0px;text-align:right;top:875.2px">$0.00</div>
<div class="a cell" style="left:242.5px;width:55.0px;text-align:right;top:891.1px">$0.00</div>
<div class="a cell" style="left:242.5px;width:55.0px;text-align:right;top:907.0px">$0.00</div>
<div class="a cell" style="left:242.5px;width:55.0px;text-align:right;top:922.9px">$0.00</div>
<div class="a cell" style="left:242.5px;width:55.0px;text-align:right;top:938.8px">$0.00</div>
<div class="a cell" style="left:242.5px;width:55.0px;text-align:right;top:954.7px">$0.00</div>
<div class="a cell" style="left:242.5px;width:55.0px;text-align:right;top:970.6px">$0.00</div>
<div class="a cell" style="left:242.5px;width:55.0px;text-align:right;top:986.5px">$0.00</div>
<div class="a cell" style="left:242.5px;width:55.0px;text-align:right;top:1002.4px">$0.00</div>
<div class="a" style="left:309px;top:517px;width:167.5px;height:23px;background:#747668"></div>
<div class="a" style="left:413px;top:517px;width:1px;height:23px;background:#8a8c80"></div>
<div class="a hd" style="left:312px;top:521.5px;font-size:15.9px">All Merchant</div>
<div class="a hd" style="left:413px;width:62.0px;text-align:right;top:521.5px;font-size:15.9px">$993.99</div>
<div class="a" style="left:309px;top:540px;width:167.5px;height:472px;background:#b9c1b8"></div>
<div class="a" style="left:309px;top:555.4px;width:167.5px;height:1px;background:#d6dad2"></div>
<div class="a" style="left:309px;top:571.3px;width:167.5px;height:1px;background:#d6dad2"></div>
<div class="a" style="left:309px;top:587.2px;width:167.5px;height:1px;background:#d6dad2"></div>
<div class="a" style="left:309px;top:603.1px;width:167.5px;height:1px;background:#d6dad2"></div>
<div class="a" style="left:309px;top:619.0px;width:167.5px;height:1px;background:#d6dad2"></div>
<div class="a" style="left:309px;top:634.9px;width:167.5px;height:1px;background:#d6dad2"></div>
<div class="a" style="left:309px;top:650.8px;width:167.5px;height:1px;background:#d6dad2"></div>
<div class="a" style="left:309px;top:666.7px;width:167.5px;height:1px;background:#d6dad2"></div>
<div class="a" style="left:309px;top:682.6px;width:167.5px;height:1px;background:#d6dad2"></div>
<div class="a" style="left:309px;top:698.5px;width:167.5px;height:1px;background:#d6dad2"></div>
<div class="a" style="left:309px;top:714.4px;width:167.5px;height:1px;background:#d6dad2"></div>
<div class="a" style="left:309px;top:730.3px;width:167.5px;height:1px;background:#d6dad2"></div>
<div class="a" style="left:309px;top:746.2px;width:167.5px;height:1px;background:#d6dad2"></div>
<div class="a" style="left:309px;top:762.1px;width:167.5px;height:1px;background:#d6dad2"></div>
<div class="a" style="left:309px;top:778.0px;width:167.5px;height:1px;background:#d6dad2"></div>
<div class="a" style="left:309px;top:793.9px;width:167.5px;height:1px;background:#d6dad2"></div>
<div class="a" style="left:309px;top:809.8px;width:167.5px;height:1px;background:#d6dad2"></div>
<div class="a" style="left:309px;top:825.7px;width:167.5px;height:1px;background:#d6dad2"></div>
<div class="a" style="left:309px;top:841.6px;width:167.5px;height:1px;background:#d6dad2"></div>
<div class="a" style="left:309px;top:857.5px;width:167.5px;height:1px;background:#d6dad2"></div>
<div class="a" style="left:309px;top:873.4px;width:167.5px;height:1px;background:#d6dad2"></div>
<div class="a" style="left:309px;top:889.3px;width:167.5px;height:1px;background:#d6dad2"></div>
<div class="a" style="left:309px;top:905.2px;width:167.5px;height:1px;background:#d6dad2"></div>
<div class="a" style="left:309px;top:921.1px;width:167.5px;height:1px;background:#d6dad2"></div>
<div class="a" style="left:309px;top:937.0px;width:167.5px;height:1px;background:#d6dad2"></div>
<div class="a" style="left:309px;top:952.9px;width:167.5px;height:1px;background:#d6dad2"></div>
<div class="a" style="left:309px;top:968.8px;width:167.5px;height:1px;background:#d6dad2"></div>
<div class="a" style="left:309px;top:984.7px;width:167.5px;height:1px;background:#d6dad2"></div>
<div class="a" style="left:309px;top:1000.6px;width:167.5px;height:1px;background:#d6dad2"></div>
<div class="a" style="left:413px;top:540px;width:1px;height:472px;background:#d6dad2"></div>
<div class="a cell" style="left:312px;top:541.3px">Amazon</div>
<div class="a cell" style="left:413px;width:61.0px;text-align:right;top:541.3px">$0.00</div>
<div class="a cell" style="left:312px;top:557.2px">Etsy</div>
<div class="a cell" style="left:413px;width:61.0px;text-align:right;top:557.2px">$0.00</div>
<div class="a cell" style="left:312px;top:573.1px">Walmart</div>
<div class="a cell" style="left:413px;width:61.0px;text-align:right;top:573.1px">$70.00</div>
<div class="a cell" style="left:312px;top:589.0px">7-Eleven</div>
<div class="a cell" style="left:413px;width:61.0px;text-align:right;top:589.0px">$0.00</div>
<div class="a cell" style="left:312px;top:604.9px">Insurance#1</div>
<div class="a cell" style="left:413px;width:61.0px;text-align:right;top:604.9px">$459.00</div>
<div class="a cell" style="left:312px;top:620.8px">Coffee Shop#1</div>
<div class="a cell" style="left:413px;width:61.0px;text-align:right;top:620.8px">$15.00</div>
<div class="a cell" style="left:312px;top:636.7px">Coffee Shop#2</div>
<div class="a cell" style="left:413px;width:61.0px;text-align:right;top:636.7px">$0.00</div>
<div class="a cell" style="left:312px;top:652.6px">Restaurant#1</div>
<div class="a cell" style="left:413px;width:61.0px;text-align:right;top:652.6px">$30.00</div>
<div class="a cell" style="left:312px;top:668.5px">Restaurant#2</div>
<div class="a cell" style="left:413px;width:61.0px;text-align:right;top:668.5px">$300.00</div>
<div class="a cell" style="left:312px;top:684.4px">Domestika</div>
<div class="a cell" style="left:413px;width:61.0px;text-align:right;top:684.4px">$19.99</div>
<div class="a cell" style="left:312px;top:700.3px">Ticket Center</div>
<div class="a cell" style="left:413px;width:61.0px;text-align:right;top:700.3px">$100.00</div>
<div class="a cell" style="left:413px;width:61.0px;text-align:right;top:716.2px">$0.00</div>
<div class="a cell" style="left:413px;width:61.0px;text-align:right;top:732.1px">$0.00</div>
<div class="a cell" style="left:413px;width:61.0px;text-align:right;top:748.0px">$0.00</div>
<div class="a cell" style="left:413px;width:61.0px;text-align:right;top:763.9px">$0.00</div>
<div class="a cell" style="left:413px;width:61.0px;text-align:right;top:779.8px">$0.00</div>
<div class="a cell" style="left:413px;width:61.0px;text-align:right;top:795.7px">$0.00</div>
<div class="a cell" style="left:413px;width:61.0px;text-align:right;top:811.6px">$0.00</div>
<div class="a cell" style="left:413px;width:61.0px;text-align:right;top:827.5px">$0.00</div>
<div class="a cell" style="left:413px;width:61.0px;text-align:right;top:843.4px">$0.00</div>
<div class="a cell" style="left:413px;width:61.0px;text-align:right;top:859.3px">$0.00</div>
<div class="a cell" style="left:413px;width:61.0px;text-align:right;top:875.2px">$0.00</div>
<div class="a cell" style="left:413px;width:61.0px;text-align:right;top:891.1px">$0.00</div>
<div class="a cell" style="left:413px;width:61.0px;text-align:right;top:907.0px">$0.00</div>
<div class="a cell" style="left:413px;width:61.0px;text-align:right;top:922.9px">$0.00</div>
<div class="a cell" style="left:413px;width:61.0px;text-align:right;top:938.8px">$0.00</div>
<div class="a cell" style="left:413px;width:61.0px;text-align:right;top:954.7px">$0.00</div>
<div class="a cell" style="left:413px;width:61.0px;text-align:right;top:970.6px">$0.00</div>
<div class="a cell" style="left:413px;width:61.0px;text-align:right;top:986.5px">$0.00</div>
<div class="a cell" style="left:413px;width:61.0px;text-align:right;top:1002.4px">$0.00</div>
<svg class="a" style="left:485.3px;top:519px" width="859" height="239.5" viewBox="0 0 859 239.5"><rect width="859" height="239.5" fill="#e0d8ca"/><text x="12.2" y="24" font-size="15.2" font-weight="bold" fill="#3f3f3f">Expense by Month</text><rect x="49.3" y="213.70" width="798.4" height="1.3" fill="#4a4a48"/><text x="45.5" y="217.70" font-size="9.3" font-weight="bold" fill="#3a3a3a" text-anchor="end">$0.00</text><rect x="49.3" y="178.75" width="798.4" height="1" fill="#c2baac"/><text x="45.5" y="182.65" font-size="9.3" font-weight="bold" fill="#3a3a3a" text-anchor="end">$100.00</text><rect x="49.3" y="143.70" width="798.4" height="1" fill="#c2baac"/><text x="45.5" y="147.60" font-size="9.3" font-weight="bold" fill="#3a3a3a" text-anchor="end">$200.00</text><rect x="49.3" y="108.65" width="798.4" height="1" fill="#c2baac"/><text x="45.5" y="112.55" font-size="9.3" font-weight="bold" fill="#3a3a3a" text-anchor="end">$300.00</text><rect x="49.3" y="73.60" width="798.4" height="1" fill="#c2baac"/><text x="45.5" y="77.50" font-size="9.3" font-weight="bold" fill="#3a3a3a" text-anchor="end">$400.00</text><rect x="49.3" y="38.55" width="798.4" height="1" fill="#c2baac"/><text x="45.5" y="42.45" font-size="9.3" font-weight="bold" fill="#3a3a3a" text-anchor="end">$500.00</text><path d="M93.6 214.3 V187.76 Q93.6 186.26 95.2 186.26 H173.2 Q174.8 186.26 174.8 187.76 V214.3z" fill="#75776a"/><text x="134.2" y="197.76" font-size="9.3" font-weight="bold" fill="#fff" text-anchor="middle">$80.00</text><text x="134.2" y="226.6" font-size="9.3" font-weight="bold" fill="#3a3a3a" text-anchor="middle">Jan 2022</text><path d="M219.2 214.3 V180.75 Q219.2 179.25 220.8 179.25 H298.8 Q300.4 179.25 300.4 180.75 V214.3z" fill="#75776a"/><text x="259.8" y="190.75" font-size="9.3" font-weight="bold" fill="#fff" text-anchor="middle">$100.00</text><text x="259.8" y="226.6" font-size="9.3" font-weight="bold" fill="#3a3a3a" text-anchor="middle">Feb 2022</text><path d="M344.8 214.3 V208.79 Q344.8 207.29 346.4 207.29 H424.4 Q426.0 207.29 426.0 208.79 V214.3z" fill="#75776a"/><text x="385.4" y="195.79" font-size="9.3" fill="#6a6a66" text-anchor="middle">$20.00</text><text x="385.4" y="226.6" font-size="9.3" font-weight="bold" fill="#3a3a3a" text-anchor="middle">Mar 2022</text><path d="M470.4 214.3 V208.79 Q470.4 207.29 472.0 207.29 H550.0 Q551.6 207.29 551.6 208.79 V214.3z" fill="#75776a"/><text x="511.0" y="195.79" font-size="9.3" fill="#6a6a66" text-anchor="middle">$19.99</text><text x="511.0" y="226.6" font-size="9.3" font-weight="bold" fill="#3a3a3a" text-anchor="middle">Apr 2022</text><path d="M596.0 214.3 V54.92 Q596.0 53.42 597.6 53.42 H675.6 Q677.2 53.42 677.2 54.92 V214.3z" fill="#75776a"/><text x="636.6" y="64.92" font-size="9.3" font-weight="bold" fill="#fff" text-anchor="middle">$459.00</text><text x="636.6" y="226.6" font-size="9.3" font-weight="bold" fill="#3a3a3a" text-anchor="middle">May 2022</text><path d="M721.6 214.3 V105.39 Q721.6 103.89 723.2 103.89 H801.2 Q802.8 103.89 802.8 105.39 V214.3z" fill="#75776a"/><text x="762.2" y="115.39" font-size="9.3" font-weight="bold" fill="#fff" text-anchor="middle">$315.00</text><text x="762.2" y="226.6" font-size="9.3" font-weight="bold" fill="#3a3a3a" text-anchor="middle">Jun 2022</text></svg>
<svg class="a" style="left:485.3px;top:768.5px" width="425.3" height="243" viewBox="0 0 425.3 243"><rect width="425.3" height="243" fill="#e0d8ca"/><text x="12.40" y="23.90" font-size="15.2" font-weight="bold" fill="#3f3f3f">Expense by Category</text><path d="M212.50 135.40 L212.50 35.70 A99.7 99.7 0 0 1 299.26 184.52z" fill="#75776a"/><path d="M212.50 135.40 L299.26 184.52 A99.7 99.7 0 0 1 279.83 208.93z" fill="#a06b58"/><path d="M212.50 135.40 L279.83 208.93 A99.7 99.7 0 0 1 223.13 234.53z" fill="#d4a189"/><path d="M212.50 135.40 L223.13 234.53 A99.7 99.7 0 0 1 210.62 235.08z" fill="#d9cba9"/><path d="M212.50 135.40 L210.62 235.08 A99.7 99.7 0 0 1 198.14 234.06z" fill="#b8c2b8"/><path d="M212.50 135.40 L198.14 234.06 A99.7 99.7 0 0 1 203.12 36.14z" fill="#bfbfbf"/><path d="M212.50 135.40 L203.12 36.14 A99.7 99.7 0 0 1 212.50 35.70z" fill="#9c9f94"/><path d="M207.90 40.20 L107.40 45.70 L12.40 45.70" fill="none" stroke="#7a766e" stroke-width="1.25"/><circle cx="207.90" cy="40.20" r="1.7" fill="#6f6d66"/><svg x="13.40" y="34.80" width="10.5" height="10.5" viewBox="0 0 22 22"><ellipse cx="10" cy="17" rx="9.5" ry="3.5" fill="#e8e8e8"/><path d="M3 8h14v5 Q17 18 10 18 Q3 18 3 13z" fill="#f4f4f4"/><ellipse cx="10" cy="8.5" rx="7" ry="2.2" fill="#4a2a1a"/><path d="M17 10 Q21 10 20 13 Q19 15 16.5 14" fill="none" stroke="#ddd" stroke-width="1.5"/></svg><text x="26.90" y="43.30" font-size="9.2" font-weight="bold" fill="#4d4d4d">Beverage</text><text x="12.40" y="54.30" font-size="9.2" font-weight="bold" fill="#737373">1.5%</text><path d="M297.70 88.00 L412.70 88.00" fill="none" stroke="#7a766e" stroke-width="1.25"/><circle cx="297.70" cy="88.00" r="1.7" fill="#6f6d66"/><svg x="376.70" y="76.50" width="10.5" height="10.5" viewBox="0 0 22 22"><path d="M1.5 9.5 Q1.5 1 11 1 Q20.5 1 20.5 9.5z" fill="#d9893a"/><rect x="1" y="9.5" width="20" height="2.6" fill="#6fb02a"/><rect x="1.5" y="12" width="19" height="3.2" fill="#6a3a1e"/><rect x="1.5" y="15" width="19" height="1.5" fill="#f0c030"/><path d="M1.5 16.5h19v1.5 Q20.5 21 16.5 21H5.5 Q1.5 21 1.5 18z" fill="#e39a48"/></svg><text x="414.00" y="85.00" font-size="9.2" font-weight="bold" fill="#4d4d4d" text-anchor="end">Food</text><text x="414.00" y="96.00" font-size="9.2" font-weight="bold" fill="#737373" text-anchor="end">33.2%</text><path d="M118.00 133.10 L12.40 133.10" fill="none" stroke="#7a766e" stroke-width="1.25"/><circle cx="118.00" cy="133.10" r="1.7" fill="#6f6d66"/><svg x="13.40" y="121.50" width="10.5" height="10.5" viewBox="0 0 22 22"><rect x="2" y="1" width="18" height="20" fill="#e8e4ea" stroke="#6a7a9a" stroke-width="1.2"/><path d="M11 4v8M7 8h8" stroke="#d93a3a" stroke-width="3"/><rect x="4" y="14" width="14" height="7" fill="#7aa0c8"/></svg><text x="26.90" y="130.00" font-size="9.2" font-weight="bold" fill="#4d4d4d">Health Care</text><text x="12.40" y="141.00" font-size="9.2" font-weight="bold" fill="#737373">46.2%</text><path d="M286.40 194.00 L316.90 184.20 L412.70 184.20" fill="none" stroke="#7a766e" stroke-width="1.25"/><circle cx="286.40" cy="194.00" r="1.7" fill="#6f6d66"/><svg x="356.20" y="173.30" width="10.5" height="10.5" viewBox="0 0 22 22"><path d="M1 3h3l3 11h11l2-8H6" fill="none" stroke="#8a8e92" stroke-width="2"/><path d="M7 7h12M8 10h10" stroke="#b0b4b8" stroke-width="1.5"/><circle cx="8" cy="18" r="2" fill="#6a6e72"/><circle cx="16" cy="18" r="2" fill="#6a6e72"/></svg><text x="414.00" y="181.80" font-size="9.2" font-weight="bold" fill="#4d4d4d" text-anchor="end">Groceries</text><text x="414.00" y="192.80" font-size="9.2" font-weight="bold" fill="#737373" text-anchor="end">5.0%</text><path d="M252.00 222.00 L316.00 204.70 L412.70 204.70" fill="none" stroke="#7a766e" stroke-width="1.25"/><circle cx="252.00" cy="222.00" r="1.7" fill="#6f6d66"/><svg x="338.20" y="193.70" width="10.5" height="10.5" viewBox="0 0 22 22"><rect x="0" y="7" width="22" height="11" fill="#f0e05a"/><rect x="13" y="3" width="8" height="9" fill="#333"/><path d="M3 12h6" stroke="#a89a2a" stroke-width="1.3"/></svg><text x="414.00" y="202.20" font-size="9.2" font-weight="bold" fill="#4d4d4d" text-anchor="end">Entertainment</text><text x="414.00" y="213.20" font-size="9.2" font-weight="bold" fill="#737373" text-anchor="end">10.1%</text><path d="M216.40 230.50 L317.50 225.10 L412.70 225.10" fill="none" stroke="#7a766e" stroke-width="1.25"/><circle cx="216.40" cy="230.50" r="1.7" fill="#6f6d66"/><svg x="319.00" y="213.80" width="10.5" height="10.5" viewBox="0 0 22 22"><path d="M4 20 L16 6" stroke="#3a3a3a" stroke-width="3.2" stroke-linecap="round"/><path d="M13 2 Q19 0 21 5 L18 5 L16 8 L18 10 Q13 12 12 7z" fill="#777"/><path d="M4 4 L18 19" stroke="#8a8a8a" stroke-width="2.6"/><path d="M1 5 L5 1 L9 4 L5 8z" fill="#555"/></svg><text x="414.00" y="222.30" font-size="9.2" font-weight="bold" fill="#4d4d4d" text-anchor="end">Home Improvem...</text><text x="414.00" y="233.30" font-size="9.2" font-weight="bold" fill="#737373" text-anchor="end">2.0%</text><path d="M205.40 230.50 L107.40 225.10 L12.40 225.10" fill="none" stroke="#7a766e" stroke-width="1.25"/><circle cx="205.40" cy="230.50" r="1.7" fill="#6f6d66"/><svg x="13.40" y="213.80" width="10.5" height="10.5" viewBox="0 0 22 22"><circle cx="11" cy="11" r="10" fill="#c8612e"/><path d="M1 11h20M11 1v20M4 4 Q10 11 4 18M18 4 Q12 11 18 18" fill="none" stroke="#6b2a10" stroke-width="1"/></svg><text x="26.90" y="222.30" font-size="9.2" font-weight="bold" fill="#4d4d4d">Hobby</text><text x="12.40" y="233.30" font-size="9.2" font-weight="bold" fill="#737373">2.0%</text></svg>
<svg class="a" style="left:919px;top:768.3px" width="425.4" height="243.2" viewBox="0 0 425.4 243.2"><rect width="425.4" height="243.2" fill="#e0d8ca"/><text x="12.20" y="24.10" font-size="15.2" font-weight="bold" fill="#3f3f3f">Expense by Merchant</text><path d="M213.00 135.00 L213.00 35.00 A100 100 0 0 1 231.74 36.77z" fill="#75776a"/><path d="M213.00 135.00 L231.74 36.77 A100 100 0 0 1 271.78 54.10z" fill="#a06b58"/><path d="M213.00 135.00 L271.78 54.10 A100 100 0 0 1 308.30 104.70z" fill="#d4a189"/><path d="M213.00 135.00 L308.30 104.70 A100 100 0 0 1 311.34 116.88z" fill="#d9cba9"/><path d="M213.00 135.00 L311.34 116.88 A100 100 0 0 1 121.73 175.86z" fill="#b9c2bb"/><path d="M213.00 135.00 L121.73 175.86 A100 100 0 0 1 118.29 167.09z" fill="#bfbfbf"/><path d="M213.00 135.00 L118.29 167.09 A100 100 0 0 1 213.00 35.00z" fill="#9c9f94"/><path d="M224.60 40.80 L315.60 45.60 L413.50 45.60" fill="none" stroke="#7a766e" stroke-width="1.25"/><circle cx="224.60" cy="40.80" r="1.7" fill="#6f6d66"/><text x="414.30" y="42.70" font-size="9.2" font-weight="bold" fill="#4d4d4d" text-anchor="end">Restaurant#1</text><text x="414.30" y="53.70" font-size="9.2" font-weight="bold" fill="#737373" text-anchor="end">3.0%</text><path d="M250.70 48.00 L318.00 65.90 L413.50 65.90" fill="none" stroke="#7a766e" stroke-width="1.25"/><circle cx="250.70" cy="48.00" r="1.7" fill="#6f6d66"/><text x="414.30" y="63.40" font-size="9.2" font-weight="bold" fill="#4d4d4d" text-anchor="end">Walmart</text><text x="414.30" y="74.40" font-size="9.2" font-weight="bold" fill="#737373" text-anchor="end">7.0%</text><path d="M289.30 79.80 L314.80 86.20 L413.50 86.20" fill="none" stroke="#7a766e" stroke-width="1.25"/><circle cx="289.30" cy="79.80" r="1.7" fill="#6f6d66"/><text x="414.30" y="83.70" font-size="9.2" font-weight="bold" fill="#4d4d4d" text-anchor="end">Ticket Center</text><text x="414.30" y="94.70" font-size="9.2" font-weight="bold" fill="#737373" text-anchor="end">10.1%</text><path d="M304.50 112.40 L413.50 112.40" fill="none" stroke="#7a766e" stroke-width="1.25"/><circle cx="304.50" cy="112.40" r="1.7" fill="#6f6d66"/><text x="414.30" y="109.60" font-size="9.2" font-weight="bold" fill="#4d4d4d" text-anchor="end">Domestika</text><text x="414.30" y="120.60" font-size="9.2" font-weight="bold" fill="#737373" text-anchor="end">2.0%</text><path d="M135.80 79.50 L12.10 79.50" fill="none" stroke="#7a766e" stroke-width="1.25"/><circle cx="135.80" cy="79.50" r="1.7" fill="#6f6d66"/><text x="12.10" y="76.90" font-size="9.2" font-weight="bold" fill="#4d4d4d">Restaurant#2</text><text x="12.10" y="87.90" font-size="9.2" font-weight="bold" fill="#737373">30.2%</text><path d="M124.40 169.30 L12.10 169.30" fill="none" stroke="#7a766e" stroke-width="1.25"/><circle cx="124.40" cy="169.30" r="1.7" fill="#6f6d66"/><text x="12.10" y="166.70" font-size="9.2" font-weight="bold" fill="#4d4d4d">Coffee Shop#1</text><text x="12.10" y="177.70" font-size="9.2" font-weight="bold" fill="#737373">1.5%</text><path d="M240.80 225.00 L413.50 225.00" fill="none" stroke="#7a766e" stroke-width="1.25"/><circle cx="240.80" cy="225.00" r="1.7" fill="#6f6d66"/><text x="414.30" y="221.70" font-size="9.2" font-weight="bold" fill="#4d4d4d" text-anchor="end">Insurance#1</text><text x="414.30" y="232.70" font-size="9.2" font-weight="bold" fill="#737373" text-anchor="end">46.2%</text></svg>
<!-- horizontal scrollbar -->
<div class="a" style="left:71px;top:1011.5px;width:1296px;height:8px;background:#fff"></div>
<div class="a" style="left:107px;top:1012.5px;width:1076px;height:6.5px;background:#dadce0;border-radius:4px"></div>
<div class="a" style="left:1343px;top:1012px;width:24px;height:7px;border-left:1px solid #eee"></div>
<svg class="a" style="left:1347px;top:1013px" width="18" height="6" viewBox="0 0 18 6"><path d="M4 1L2 3 4 5M14 1L16 3 14 5" fill="none" stroke="#9aa0a6" stroke-width=".9"/></svg>
<svg class="a" style="left:1367px;top:984px" width="8" height="24" viewBox="0 0 8 24"><path d="M2 5L4 3 6 5M2 17L4 19 6 17" fill="none" stroke="#9aa0a6" stroke-width=".9"/></svg>
<!-- tab bar -->
<div class="a" style="left:71px;top:1019px;width:1303px;height:29px;background:linear-gradient(#f6f7f8,#eceded)"></div>
<div class="a" style="left:108.5px;top:1026px;font-size:15px;font-weight:bold;color:#5f6368;line-height:18px">+</div>
<svg class="a" style="left:131.5px;top:1030px" width="10" height="10" viewBox="0 0 10 10"><path d="M0 1h10M0 3.7h10M0 6.3h10M0 9h10" stroke="#5f6368" stroke-width="1.5"/></svg>
<div class="a" style="left:158px;top:1021px;width:1px;height:27px;background:#e2e3e5"></div>
<div class="a" style="left:253px;top:1021px;width:1px;height:27px;background:#e2e3e5"></div>
<div class="a" style="left:326.5px;top:1019px;width:112px;height:29px;background:linear-gradient(#ffffff,#f7f8f8);border-left:1px solid #e6e6e6;border-right:1px solid #e6e6e6"></div>
<div class="a" style="left:563px;top:1021px;width:1px;height:27px;background:#e2e3e5"></div>
<div class="a tab" style="left:171px">Instruction</div>
<svg class="a" style="left:234.5px;top:1034px" width="7" height="4" viewBox="0 0 7 4"><path d="M0 0h7L3.5 4z" fill="#5f6368"/></svg>
<div class="a tab" style="left:266px">Master</div>
<svg class="a" style="left:308.5px;top:1034px" width="7" height="4" viewBox="0 0 7 4"><path d="M0 0h7L3.5 4z" fill="#5f6368"/></svg>
<svg class="a" style="left:339px;top:1029px" width="9" height="12" viewBox="0 0 9 12"><path d="M2 5.5V3.5a2.5 2.5 0 0 1 5 0V5.5" fill="none" stroke="#188038" stroke-width="1.6"/><rect x="0" y="5" width="9" height="7" rx="1" fill="#188038"/><circle cx="4.5" cy="8.5" r="1" fill="#fff"/></svg>
<div class="a tab" style="left:355.5px;color:#188038">Dashboard</div>
<svg class="a" style="left:420px;top:1034px" width="7" height="4" viewBox="0 0 7 4"><path d="M0 0h7L3.5 4z" fill="#188038"/></svg>
<div class="a tab" style="left:450.5px">Expense Tracker</div>
<svg class="a" style="left:544px;top:1034px" width="7" height="4" viewBox="0 0 7 4"><path d="M0 0h7L3.5 4z" fill="#5f6368"/></svg>
<svg class="a" style="left:1304px;top:1028px" width="14" height="15" viewBox="0 0 14 15"><path d="M1.5 0h11Q14 0 14 1.5V11.5Q14 13 12.5 13H8.5L7 15 5.5 13H1.5Q0 13 0 11.5V1.5Q0 0 1.5 0z" fill="#5f6368"/><path d="M7 2.5L8.2 5.8 11.5 6.5 8.2 7.2 7 10.5 5.8 7.2 2.5 6.5 5.8 5.8z" fill="#fff"/></svg>
<svg class="a" style="left:1351px;top:1032px" width="7" height="10" viewBox="0 0 7 10"><path d="M5.5 1L1.5 5 5.5 9" fill="none" stroke="#5f6368" stroke-width="1.6"/></svg>
<div id="vline" class="a"></div>
</body></html>
